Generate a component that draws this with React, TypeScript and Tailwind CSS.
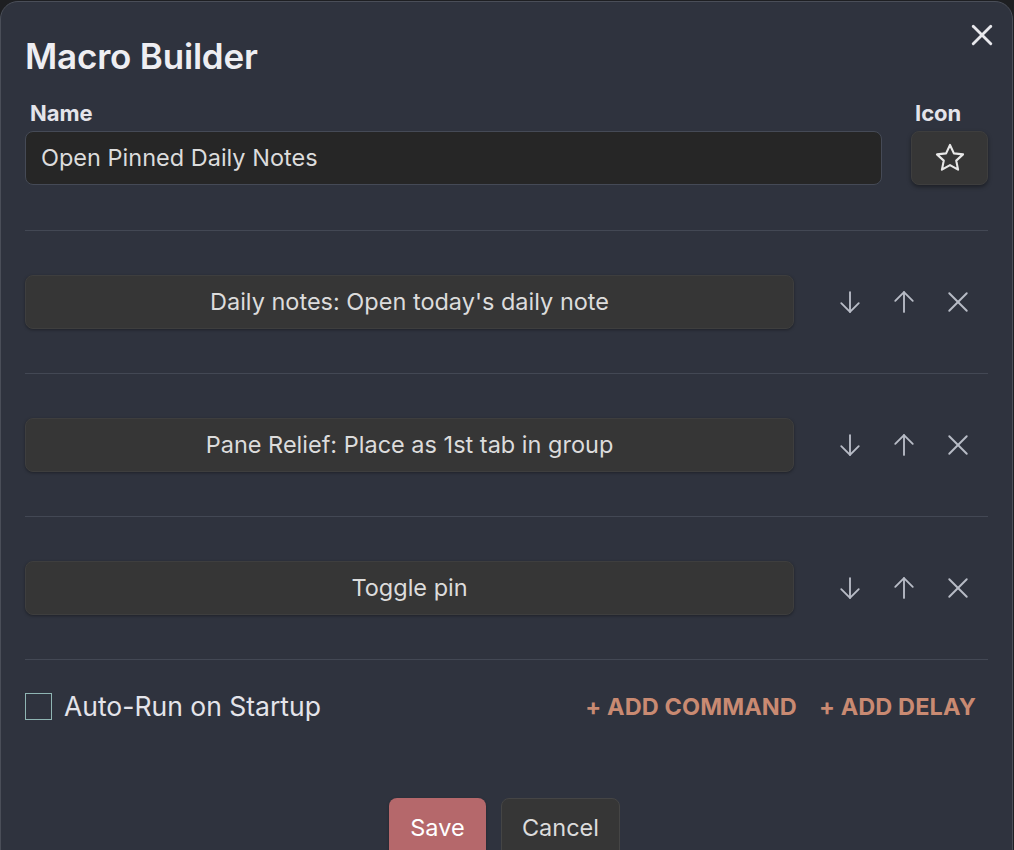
import React from "react";

const ArrowDown = () => (
  <svg width="28" height="28" viewBox="0 0 24 24" fill="none" stroke="currentColor" strokeWidth="1.6" strokeLinecap="round" strokeLinejoin="round">
    <path d="M12 3.5v17" />
    <path d="M4.5 13l7.5 7.5 7.5-7.5" />
  </svg>
);
const ArrowUp = () => (
  <svg width="28" height="28" viewBox="0 0 24 24" fill="none" stroke="currentColor" strokeWidth="1.6" strokeLinecap="round" strokeLinejoin="round">
    <path d="M12 20.5v-17" />
    <path d="M4.5 11L12 3.5 19.5 11" />
  </svg>
);
const XIcon = ({ size = 28, w = 1.6 }: { size?: number; w?: number }) => (
  <svg width={size} height={size} viewBox="0 0 24 24" fill="none" stroke="currentColor" strokeWidth={w} strokeLinecap="round" strokeLinejoin="round">
    <path d="M4.5 4.5l15 15" />
    <path d="M19.5 4.5l-15 15" />
  </svg>
);
const Star = () => (
  <svg width="34" height="34" viewBox="0 0 24 24" fill="none" stroke="currentColor" strokeWidth="1.5" strokeLinejoin="round">
    <path d="M12 2.8l2.75 5.9 6.45.75-4.8 4.4 1.3 6.35L12 17l-5.7 3.2 1.3-6.35-4.8-4.4 6.45-.75z" />
  </svg>
);

function Row({ label }: { label: string }) {
  return (
    <>
      <div className="h-px bg-[#434854]" />
      <div className="flex items-center py-[44px]">
        <div className="w-[769px] h-[54px] rounded-[8px] bg-[#363636] shadow-[0_1px_3px_rgba(0,0,0,0.35)] border border-[#3e3e3e] flex items-center justify-center text-[23.5px] text-[#dcdcdc]">
          {label}
        </div>
        <div className="flex items-center text-[#b8bcc6] ml-[42px] gap-[26px]">
          <ArrowDown />
          <ArrowUp />
          <XIcon />
        </div>
      </div>
    </>
  );
}

export default function App() {
  return (
    <div className="w-[1014px] h-[850px] overflow-hidden bg-[#1e1f22] pt-[1px]" style={{ fontFamily: "Inter, 'Noto Sans', sans-serif" }}>
      <div className="relative h-[900px] w-[1013px] rounded-[18px] border border-[#4a4e58] bg-[#2f333e] px-[24px]">
        <button className="absolute right-[16px] top-[19px] text-[#e8e8ec]">
          <XIcon size={28} w={2.5} />
        </button>
        <h1 className="pt-[32px] text-[35px] leading-[44px] font-semibold text-[#eeeef2] tracking-[-0.2px]">Macro Builder</h1>
        <div className="flex items-end mt-[20px] gap-[29px]">
          <div className="flex-1">
            <div className="pl-[5px] text-[22px] font-bold text-[#e4e4ea] leading-[30px]">Name</div>
            <div className="mt-[3px] h-[54px] rounded-[8px] border border-[#454a56] bg-[#262626] flex items-center pl-[15px] text-[23.5px] text-[#dcdcdc]">
              Open Pinned Daily Notes
            </div>
          </div>
          <div className="w-[77px] flex flex-col">
            <div className="pl-[4px] text-[22px] font-bold text-[#e4e4ea] leading-[30px]">Icon</div>
            <div className="mt-[3px] w-[77px] h-[54px] rounded-[8px] bg-[#363636] border border-[#3e3e3e] shadow-[0_2px_4px_rgba(0,0,0,0.4)] flex items-center justify-center text-[#e8e8e8]">
              <Star />
            </div>
          </div>
        </div>
        <div className="mt-[45px]" />
        <Row label="Daily notes: Open today's daily note" />
        <Row label="Pane Relief: Place as 1st tab in group" />
        <Row label="Toggle pin" />
        <div className="h-px bg-[#434854]" />
        <div className="flex items-center mt-[27px]">
          <div className="w-[27px] h-[27px] border border-[#8fb5b3]" />
          <span className="ml-[12px] text-[26.5px] text-[#e4e4ea]">Auto-Run on Startup</span>
          <div className="ml-auto mr-[12px] flex items-center gap-[22px] text-[23.5px] font-bold text-[#c98a72] tracking-[0.1px]">
            <span>+ ADD COMMAND</span>
            <span>+ ADD DELAY</span>
          </div>
        </div>
        <div className="flex justify-center gap-[15px] mt-[71px] pr-[4px]">
          <button className="w-[97px] h-[60px] rounded-[8px] bg-[#b5686b] text-[23.5px] text-white shadow-[0_1px_3px_rgba(0,0,0,0.3)]">Save</button>
          <button className="w-[119px] h-[60px] rounded-[8px] bg-[#363636] border border-[#454545] text-[23.5px] text-[#dcdcdc]">Cancel</button>
        </div>
      </div>
    </div>
  );
}
